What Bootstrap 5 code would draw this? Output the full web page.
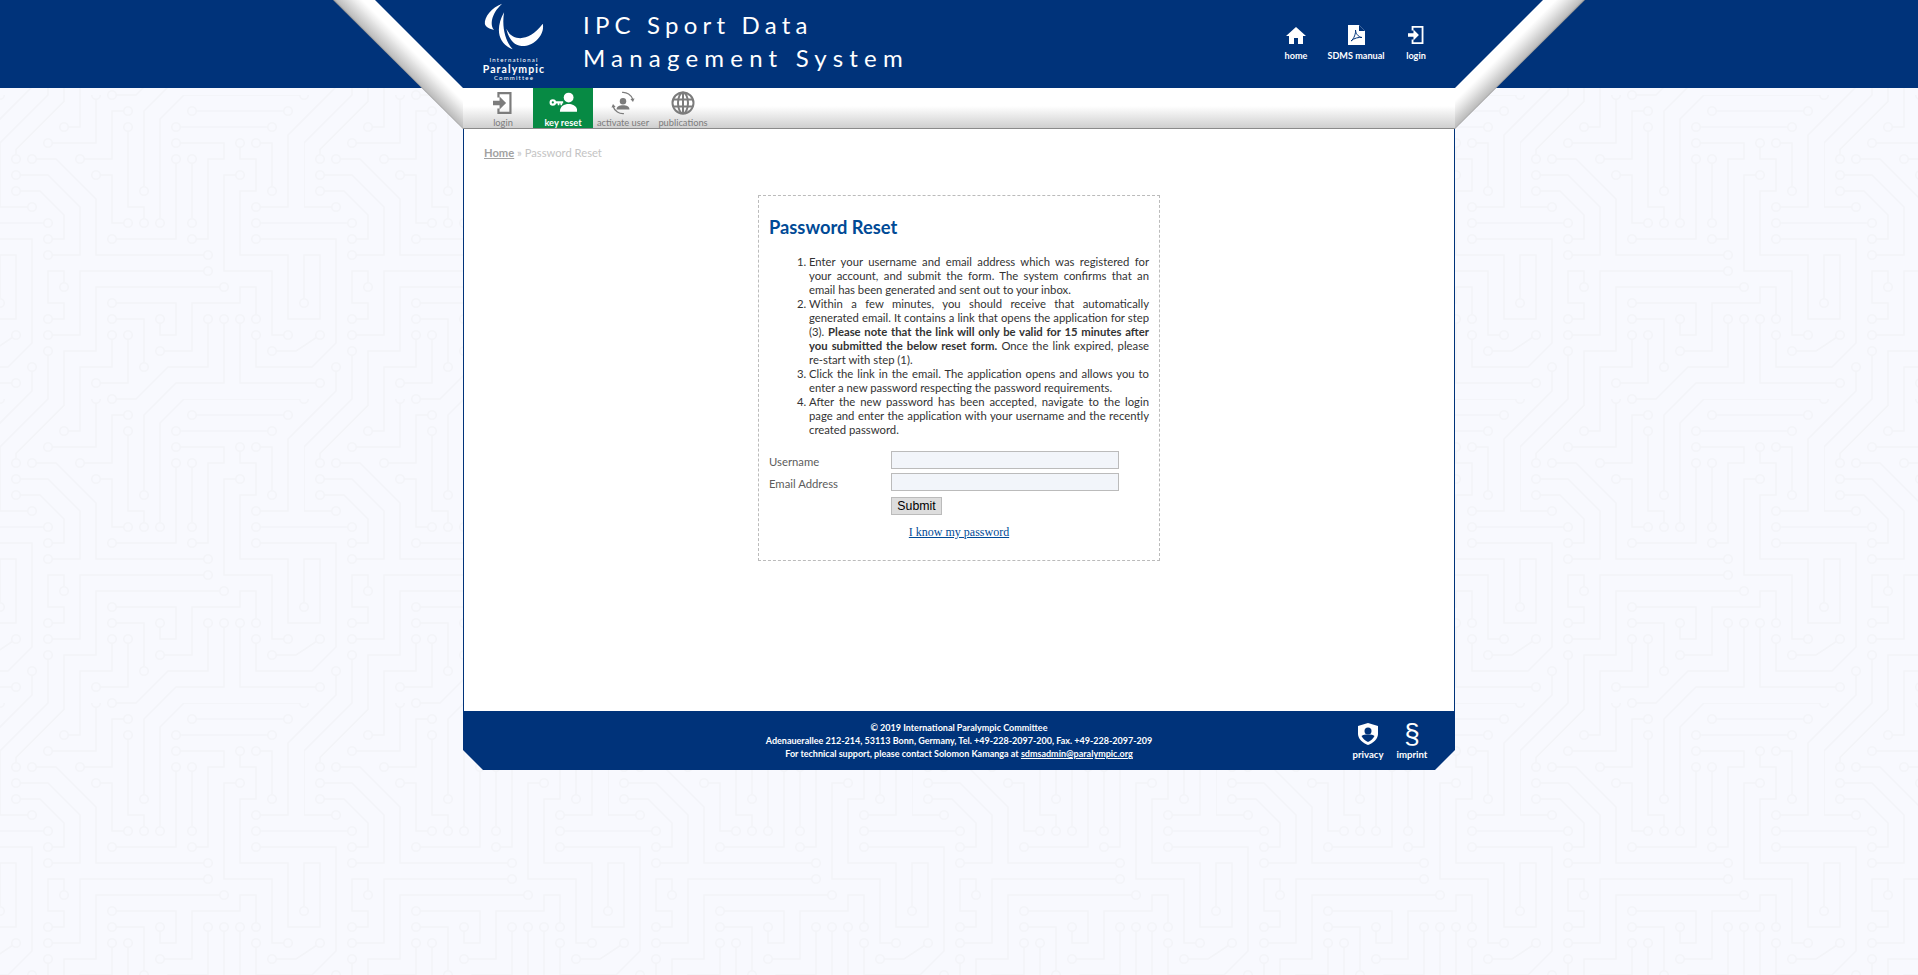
<!DOCTYPE html>
<html lang="en">
<head>
  <meta charset="UTF-8">
  <title>IPC Sport Data Management System</title>
  <meta name="viewport" content="width=device-width, initial-scale=1">
  <link href="https://cdn.jsdelivr.net/npm/bootstrap@5.3.3/dist/css/bootstrap.min.css" rel="stylesheet">
  <style>
    body {
      min-height: 100vh;
      font-family: Lato, "Liberation Sans", sans-serif;
      font-size: 11.3px;
      color: #333;
      background-color: #f8f9fe;
      background-position: 0 95px;
      background-image: url("data:image/svg+xml,%3Csvg xmlns='http://www.w3.org/2000/svg' width='304' height='304' viewBox='0 0 19 19'%3E%3Cdefs%3E%3Cmarker id='c' markerUnits='userSpaceOnUse' markerWidth='1' markerHeight='1' viewBox='-.5 -.5 1 1'%3E%3Ccircle r='.27' fill='%23f8f9fe' stroke='%23f3f4f8' stroke-width='.1'/%3E%3C/marker%3E%3Cg id='p' fill='none' stroke='%23f3f4f8' stroke-width='.1' marker-start='url(%23c)' marker-end='url(%23c)'%3E%3Cpath d='M12 1H18'/%3E%3Cpath d='M11 2H17'/%3E%3Cpath d='M19 0H11.5L10 1.5V8'/%3E%3Cpath d='M14 14V18H11L9 20V25'/%3E%3Cpath d='M8 2V7H9V8'/%3E%3Cpath d='M8 1H7V4H5'/%3E%3Cpath d='M6 5H7V8H8'/%3E%3Cpath d='M6 0V3H3'/%3E%3Cpath d='M4 21H5V17H7V15'/%3E%3Cpath d='M13 14V17H10.5L8.5 19H7'/%3E%3Cpath d='M2 4H3.5L6 6.5V10H13'/%3E%3Cpath d='M1 5H3L5 7V10H3'/%3E%3Cpath d='M1 6H2.5L4 7.5V9H3'/%3E%3Cpath d='M3 16V19L0 22V26H2'/%3E%3Cpath d='M16 8H22'/%3E%3Cpath d='M21 17V18.5L18 21.5V26H16'/%3E%3Cpath d='M16 9H21V15.5L19.5 17H16V15'/%3E%3Cpath d='M7 9H11V4'/%3E%3Cpath d='M12 4V8'/%3E%3Cpath d='M12 9H13V4H14V3H11'/%3E%3Cpath d='M15 3V4H16V6H15V10H18V14H20V10H19V13'/%3E%3Cpath d='M16 3H17V6'/%3E%3Cpath d='M15 5H14V11H17V15H18'/%3E%3Cpath d='M13 11H5V15H3'/%3E%3Cpath d='M14 12H6V16H4V19.4L1 22.4V23'/%3E%3Cpath d='M7 13H11V15H10V14'/%3E%3Cpath d='M7 14H9V17'/%3E%3Cpath d='M8 15V18H6'/%3E%3Cpath d='M10 16H12V13H15V12H16V14'/%3E%3Cpath d='M15 14V18H20'/%3E%3Cpath d='M17 16H18.5L20 15'/%3E%3Cpath d='M4 12V11H3V13H4V14H3'/%3E%3C/g%3E%3C/defs%3E%3Cuse href='%23p'/%3E%3Cuse href='%23p' x='-19'/%3E%3Cuse href='%23p' y='-19'/%3E%3Cuse href='%23p' x='-19' y='-19'/%3E%3C/svg%3E");
    }
    .sd-wrap { width: 992px; margin: 0 auto; position: relative; }

    .sd-band { background: #00337a; height: 88px; }
    .sd-logo { width: 66px; margin-left: 18px; color: #fff; }
    .sd-logo svg { display: block; width: 66px; height: 47px; margin: 3px 0 6px; }
    .sd-logo div { text-align: center; white-space: nowrap; }
    .sd-logo-s { font-size: 6px; line-height: 8px; letter-spacing: 1.2px; }
    .sd-logo-b { font-size: 10.5px; line-height: 10px; letter-spacing: 1.1px; font-weight: 700; }
    .sd-title { margin: 8px 0 0 36px; font-size: 24px; line-height: 33px; letter-spacing: 5.2px; color: #fff; white-space: nowrap; }
    .sd-title span { letter-spacing: 6.2px; }

    .sd-top { margin-right: 9px; }
    .sd-top-item { width: 60px; padding-top: 25px; text-align: center; color: #fff; font-size: 9.1px; line-height: 12px; font-weight: 700; text-decoration: none; white-space: nowrap; }
    .sd-top-item svg { display: block; height: 20px; margin: 0 auto 5px; }

    .sd-tabs { height: 41px; padding-left: 10px; background: linear-gradient(#fff 45%, #cfcfcf 100%); border-bottom: 1px solid #8a8a8a; }
    .sd-tab { width: 60px; height: 40px; padding-top: 3px; text-align: center; color: #7c7c7c; font-size: 9.3px; line-height: 11px; text-decoration: none; white-space: nowrap; }
    .sd-tab svg { display: block; height: 24px; margin: 0 auto 2px; }
    .sd-tab-on { background: #078a44; color: #fff; font-weight: 700; }

    .sd-strips { position: absolute; top: 0; left: 0; right: 0; height: 0; z-index: 5; }
    .sd-strips .sd-wrap { height: 0; }
    .sd-strip { position: absolute; top: 0; width: 130px; height: 130px; }
    .sd-strip-l { left: -130px; }
    .sd-strip-r { right: -130px; transform: scaleX(-1); }

    .sd-main { height: 582px; background: #fff; border-left: 1px solid #00337a; border-right: 1px solid #00337a; padding: 16px 20px 0; }
    .sd-crumb { font-size: 11.2px; line-height: 16px; color: #c4c4c4; }
    .sd-crumb a { color: #a2a2a2; font-weight: 700; }

    .sd-box { width: 402px; height: 366px; margin: 34px auto 0; padding: 0 10px; border: 1px dashed #bbb; }
    .sd-box h1 { margin: 19px 0 0; font-family: Lato, sans-serif; font-size: 18.3px; line-height: 24px; font-weight: 700; color: #004a96; }
    .sd-box ol { margin: 16px 0 0; padding: 0 0 0 40px; line-height: 14px; text-align: justify; }
    .sd-form { margin-top: 14px; }
    .sd-form-row { height: 18px; margin-bottom: 4px; color: #5c5c5c; }
    .sd-form-row label { width: 122px; padding-top: 3px; }
    .sd-input { width: 228px; height: 18px; padding: 0 3px; background: #f2f5fa; border: 1px solid #bbb; }
    .sd-submit { width: 51px; height: 18px; margin: 2px 0 0 122px; padding: 0; font: 12.3px "Liberation Sans", sans-serif; color: #000; background: #ddd; border: 1px solid #bbb; }
    .sd-back { margin-top: 9px; font: 12px/16px "Liberation Serif", serif; }
    .sd-back a { color: #004a96; }

    .sd-foot { height: 59px; background: #00337a; color: #fff; clip-path: polygon(0 0, 100% 0, 100% 39px, 972px 100%, 20px 100%, 0 39px); display: grid; grid-template-columns: 1fr auto 1fr; }
    .sd-foot-text { padding-top: 10px; font-size: 9px; line-height: 13px; font-weight: 700; text-align: center; }
    .sd-foot-text a { color: #fff; }
    .sd-foot-links { padding: 12px 21px 0 0; }
    .sd-foot-item { width: 44px; color: #fff; font-size: 9.6px; line-height: 12px; font-weight: 700; text-align: center; text-decoration: none; }
    .sd-foot-item svg { display: block; height: 22px; margin: 0 auto 4px; }
    .sd-para { display: block; height: 22px; margin-bottom: 4px; font: 28px/22px "Liberation Sans", sans-serif; font-weight: 400; }
  </style>
</head>
<body>

  <svg width="0" height="0" class="position-absolute">
    <defs>
      <symbol id="i-login" viewBox="0 0 18 22">
        <path d="M4 1H17V21H4V16H6V19H15V3H6V6H4Z"/>
        <path d="M0 9H6V5L12 11L6 17V13H0Z"/>
      </symbol>
      <linearGradient id="stripFade" gradientUnits="userSpaceOnUse" x1="0" y1="0" x2="21" y2="-21">
        <stop offset="0" stop-color="#8f8f8f"/>
        <stop offset=".06" stop-color="#bdbdbd"/>
        <stop offset=".5" stop-color="#ededed"/>
        <stop offset=".7" stop-color="#fff"/>
      </linearGradient>
    </defs>
  </svg>

  <!-- Schraegen links und rechts -->
  <div class="sd-strips">
    <div class="sd-wrap">
      <svg class="sd-strip sd-strip-l" viewBox="0 0 130 130"><path fill="url(#stripFade)" d="M0 0H42L130 88V129Z"/></svg>
      <svg class="sd-strip sd-strip-r" viewBox="0 0 130 130"><path fill="url(#stripFade)" d="M0 0H42L130 88V129Z"/></svg>
    </div>
  </div>

  <!-- Kopf -->
  <div class="sd-band">
    <div class="sd-wrap d-flex">
      <div class="sd-logo">
        <svg viewBox="36 12 184 142" fill="currentColor">
          <path d="M92 14C60 25 38 55 40 75C42 85 55 92 68 93C55 80 58 45 92 14Z"/>
          <path d="M98 40C70 90 80 135 124 152C104 130 90 90 98 40Z"/>
          <path d="M105 90C120 125 170 135 215 75C222 110 185 145 150 142C125 140 110 115 105 90Z"/>
        </svg>
        <div class="sd-logo-s">International</div>
        <div class="sd-logo-b">Paralympic</div>
        <div class="sd-logo-s">Committee</div>
      </div>
      <div class="sd-title">IPC Sport Data<br><span>Management System</span></div>
      <nav class="nav ms-auto flex-nowrap align-items-start sd-top">
        <a class="sd-top-item" href="#">
          <svg viewBox="0 0 20 20" fill="currentColor"><path d="M10 2L20 11H17V19H12V13H8V19H3V11H0Z"/></svg>
          home
        </a>
        <a class="sd-top-item" href="#">
          <svg viewBox="0 0 17 20"><path fill="#fff" d="M0 0H11L17 6V20H0Z"/><path fill="#00337a" d="M11 0L17 6H11Z"/><path fill="none" stroke="#00337a" d="M3 16C6 14 8 8 7.500 5C7.500 8 10 12 14 12.500C11 12 6 13 3 16Z"/></svg>
          SDMS manual
        </a>
        <a class="sd-top-item" href="#">
          <svg viewBox="0 0 18 22" fill="currentColor"><use href="#i-login"/></svg>
          login
        </a>
      </nav>
    </div>
  </div>

  <div class="sd-wrap">
    <!-- Reiter -->
    <nav class="sd-tabs nav flex-nowrap">
      <a class="sd-tab" href="#">
        <svg viewBox="0 0 18 22" fill="currentColor"><use href="#i-login"/></svg>
        login
      </a>
      <a class="sd-tab sd-tab-on" href="#">
        <svg viewBox="0 0 26 22" fill="currentColor">
          <circle cx="18" cy="6" r="4.500"/>
          <path d="M10 19C10 14 14 12 18 12C22 12 26 14 26 19Z"/>
          <path fill-rule="evenodd" d="M3.500 7.500A3 3 0 1 1 3.500 13.500A3 3 0 1 1 3.500 7.500ZM3.500 9.500A1 1 0 1 0 3.500 11.500A1 1 0 1 0 3.500 9.500Z"/>
          <path d="M6 9.500H13V11.500H12V13H10.500V11.500H9.500V13H8V11.500H6Z"/>
        </svg>
        key reset
      </a>
      <a class="sd-tab" href="#">
        <svg viewBox="0 0 26 26" fill="currentColor">
          <circle cx="13" cy="11" r="3.500"/>
          <path d="M6 20C6 17 9 15.500 13 15.500C17 15.500 20 17 20 20Z"/>
          <path fill="none" stroke="currentColor" stroke-width="1.400" d="M12 1.500C17 1 22 4 23.500 9"/>
          <path d="M25.500 8L23.800 12L21 8.800Z"/>
          <path fill="none" stroke="currentColor" stroke-width="1.400" d="M14 24.500C9 25 4 22 2.500 17"/>
          <path d="M0.500 18L2.200 14L5 17.200Z"/>
        </svg>
        activate user
      </a>
      <a class="sd-tab" href="#">
        <svg viewBox="0 0 24 24" fill="none" stroke="currentColor" stroke-width="2">
          <circle cx="12" cy="12" r="10.500"/>
          <ellipse cx="12" cy="12" rx="5" ry="10.500"/>
          <path d="M12 1.500V22.500M2 8.500H22M2 15.500H22"/>
        </svg>
        publications
      </a>
    </nav>

    <!-- Inhalt -->
    <div class="sd-main">
      <div class="sd-crumb"><a href="#">Home</a> » Password Reset</div>

      <div class="sd-box">
        <h1>Password Reset</h1>
        <ol>
          <li>Enter your username and email address which was registered for your account, and submit the form. The system confirms that an email has been generated and sent out to your inbox.</li>
          <li>Within a few minutes, you should receive that automatically generated email. It contains a link that opens the application for step (3). <b>Please note that the link will only be valid for 15 minutes after you submitted the below reset form.</b> Once the link expired, please re-start with step (1).</li>
          <li>Click the link in the email. The application opens and allows you to enter a new password respecting the password requirements.</li>
          <li>After the new password has been accepted, navigate to the login page and enter the application with your username and the recently created password.</li>
        </ol>
        <form class="sd-form">
          <div class="sd-form-row d-flex"><label for="user">Username</label><input class="sd-input" type="text" id="user"></div>
          <div class="sd-form-row d-flex"><label for="mail">Email Address</label><input class="sd-input" type="text" id="mail"></div>
          <div class="d-flex"><button class="sd-submit" type="button">Submit</button></div>
        </form>
        <div class="sd-back text-center"><a href="#">I know my password</a></div>
      </div>
    </div>

    <!-- Fuss -->
    <div class="sd-foot">
      <div></div>
      <div class="sd-foot-text">
        © 2019 International Paralympic Committee<br>
        Adenauerallee 212-214, 53113 Bonn, Germany, Tel. +49-228-2097-200, Fax. +49-228-2097-209<br>
        For technical support, please contact Solomon Kamanga at <a href="#">sdmsadmin@paralympic.org</a>
      </div>
      <div class="sd-foot-links d-flex justify-content-end">
        <a class="sd-foot-item" href="#">
          <svg viewBox="0 0 20 22"><path fill="#fff" d="M10 0L20 3V11C20 16 15 20 10 22C5 20 0 16 0 11V3Z"/><circle cx="10" cy="8" r="3.500" fill="#00337a"/><path fill="#00337a" d="M3.500 13C5 11.800 7 11.500 10 11.500C13 11.500 15 11.800 16.500 13C15 16 12.500 18 10 19C7.500 18 5 16 3.500 13Z"/></svg>
          privacy
        </a>
        <a class="sd-foot-item" href="#">
          <span class="sd-para">§</span>
          imprint
        </a>
      </div>
    </div>
  </div>

  <script src="https://cdn.jsdelivr.net/npm/bootstrap@5.3.3/dist/js/bootstrap.bundle.min.js"></script>
</body>
</html>
